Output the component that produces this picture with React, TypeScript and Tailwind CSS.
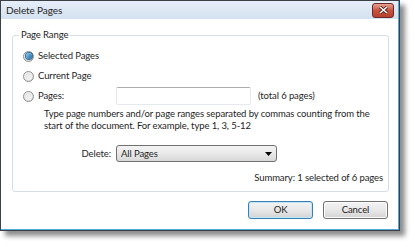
import { useState } from 'react';

function Radio({ checked }: { checked: boolean }) {
    return (
        <span className="relative flex h-[11px] w-[11px] shrink-0 items-center justify-center rounded-full border border-[#8e8f8f] bg-gradient-to-br from-[#f4f4f4] to-[#d9d9d9]">
            {checked ? (
                <span className="h-[6px] w-[6px] rounded-full bg-gradient-to-br from-[#8ccdf3] to-[#15649d] ring-1 ring-[#2d6c99]" />
            ) : (
                <span className="h-[7px] w-[7px] rounded-full bg-gradient-to-br from-[#e2e2e2] to-[#f7f7f7]" />
            )}
        </span>
    );
}

function Button({ label, primary }: { label: string; primary?: boolean }) {
    return (
        <button
            className={
                'h-[18px] w-[65px] rounded-[3px] border bg-gradient-to-b from-[#f3f3f3] via-[#e8e8e8] to-[#d3d3d3] text-[9.5px] text-[#1b1b1b] ' +
                (primary ? 'border-[#3c7fb1] shadow-[inset_0_0_0_1px_#bfe6f9]' : 'border-[#707070] shadow-[inset_0_0_0_1px_#fcfcfc]')
            }
        >
            {label}
        </button>
    );
}

export default function App() {
    const [choice, setChoice] = useState(0);
    const options = ['Selected Pages', 'Current Page'];

    return (
        <div className="h-[247px] w-[415px] bg-white font-['Lato',sans-serif] text-[9.5px] leading-[12px] tracking-[-0.1px] text-[#1e1e1e]">
            <div className="flex h-[231px] w-[400px] flex-col border border-[#3b4046] shadow-[5px_5px_5px_rgba(0,0,0,0.45)]">
                <div className="flex flex-1 flex-col border-b border-r border-[#4fa9d9]">
                    {/* Title bar */}
                    <div className="flex h-[18px] items-center justify-between bg-gradient-to-b from-[#e6eef8] to-[#d4e1f0] pl-[5px] pr-[4px]">
                        <span className="text-[10px]">Delete Pages</span>
                        <span className="flex h-[15px] w-[22px] items-center justify-center rounded-[3px] border border-[#6b2a2a] bg-gradient-to-b from-[#e8a093] via-[#c9523f] to-[#b7402e]">
                            <svg width="9" height="8" viewBox="0 0 9 8">
                                <path d="M1 1 L8 7 M8 1 L1 7" stroke="#4a1a14" strokeWidth="3" />
                                <path d="M1 1 L8 7 M8 1 L1 7" stroke="#fff" strokeWidth="1.6" />
                            </svg>
                        </span>
                    </div>

                    {/* Body */}
                    <div className="flex flex-1 flex-col bg-white pl-[11px] pr-[10px]">
                        <div className="relative mt-[16px] h-[157px] w-[377px] rounded-[3px] border border-[#d5dde6]">
                            <span className="absolute -top-[7px] left-[6px] bg-white px-[2px]">Page Range</span>

                            <div className="flex flex-col pt-[10px]">
                                {options.map((label, i) => (
                                    <div
                                        key={label}
                                        onClick={() => setChoice(i)}
                                        className="flex h-[20px] items-center gap-[4px] pl-[10px]"
                                    >
                                        <Radio checked={choice === i} />
                                        <span>{label}</span>
                                    </div>
                                ))}
                                <div className="flex h-[20px] items-center pl-[10px]">
                                    <div className="flex w-[93px] items-center gap-[4px]" onClick={() => setChoice(2)}>
                                        <Radio checked={choice === 2} />
                                        <span>Pages:</span>
                                    </div>
                                    <input className="h-[18px] w-[135px] rounded-[2px] border border-[#e3e9ef] border-t-[#abadb3] bg-white outline-none" />
                                    <span className="ml-[7px]">(total 6 pages)</span>
                                </div>
                            </div>

                            <p className="mt-[2px] pl-[31px] pr-[8px]">
                                Type page numbers and/or page ranges separated by commas counting from the start of the document. For example, type 1, 3, 5-12
                            </p>

                            <div className="mt-[13px] flex items-center">
                                <span className="w-[98px] text-right">Delete:</span>
                                <div className="ml-[5px] flex h-[17px] w-[161px] items-center justify-between rounded-[3px] border border-[#707070] bg-gradient-to-b from-[#f3f3f3] via-[#e9e9e9] to-[#d8d8d8] pl-[4px] pr-[4px]">
                                    <span>All Pages</span>
                                    <svg width="7" height="4" viewBox="0 0 7 4">
                                        <path d="M0 0 H7 L3.5 4 Z" fill="#000" />
                                    </svg>
                                </div>
                            </div>

                            <div className="mt-[10px] pr-[5px] text-right">Summary: 1 selected of 6 pages</div>
                        </div>

                        <div className="mt-[9px] flex justify-end gap-[10px]">
                            <Button label="OK" primary />
                            <Button label="Cancel" />
                        </div>
                    </div>
                </div>
            </div>
        </div>
    );
}
